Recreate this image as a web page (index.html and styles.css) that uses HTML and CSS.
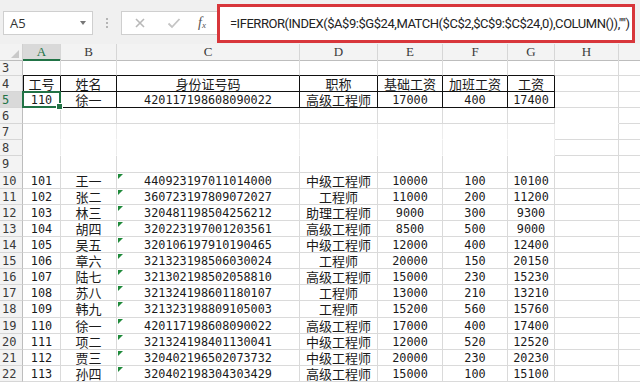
FILE: index.html
```html
<!DOCTYPE html>
<html lang="zh">
<head>
<meta charset="utf-8">
<link rel="stylesheet" href="styles.css">
</head>
<body>
<div class="toolbar">
  <div class="namebox"><span class="nb-text">A5</span><span class="nb-arrow"></span></div>
  <div class="dots"><i></i><i></i><i></i></div>
  <div class="fbox">
    <svg class="ic ic-x" width="12" height="12" viewBox="0 0 12 12"><path d="M2 2L10 10M10 2L2 10" stroke="#b8b8b8" stroke-width="1.6" fill="none"/></svg>
    <svg class="ic ic-ok" width="14" height="12" viewBox="0 0 14 12"><path d="M1.5 6.5L5 10L12.5 2" stroke="#c4c4c4" stroke-width="1.8" fill="none"/></svg>
    <span class="fx">f<sub>x</sub></span>
    <div class="ftext">=IFERROR(INDEX($A$9:$G$24,MATCH($C$2,$C$9:$C$24,0),COLUMN()),"")</div>
  </div>
</div>
<div class="sheet">
  <div class="row hdr">
    <div class="corner"><span class="ctri"></span></div>
    <div class="ch sel">A</div><div class="ch">B</div><div class="ch">C</div><div class="ch">D</div><div class="ch">E</div><div class="ch">F</div><div class="ch">G</div><div class="ch">H</div><div class="ch last"></div>
  </div>
  <div class="row tb-above">
    <div class="rh">3</div>
    <div class="c"></div><div class="c"></div><div class="c"></div><div class="c"></div><div class="c"></div><div class="c"></div><div class="c"></div><div class="c h"></div><div class="c i"></div>
  </div>
  <div class="row tbl">
    <div class="rh">4</div>
    <div class="c t first zh">工号</div><div class="c t zh">姓名</div><div class="c t zh">身份证号码</div><div class="c t zh">职称</div><div class="c t zh">基础工资</div><div class="c t zh">加班工资</div><div class="c t zh">工资</div><div class="c h"></div><div class="c i"></div>
  </div>
  <div class="row tbl">
    <div class="rh rsel">5</div>
    <div class="c t first n active">110</div><div class="c t zh">徐一</div><div class="c t n">420117198608090022</div><div class="c t zh">高级工程师</div><div class="c t n">17000</div><div class="c t n">400</div><div class="c t n">17400</div><div class="c h"></div><div class="c i"></div>
  </div>
  <div class="row">
    <div class="rh">6</div>
    <div class="c"></div><div class="c"></div><div class="c"></div><div class="c"></div><div class="c"></div><div class="c"></div><div class="c"></div><div class="c h nob"></div><div class="c i"></div>
  </div>
  <div class="row blank">
    <div class="rh">7</div>
    <div class="c"></div><div class="c"></div><div class="c"></div><div class="c"></div><div class="c"></div><div class="c"></div><div class="c"></div><div class="c h"></div><div class="c i"></div>
  </div>
  <div class="row blank">
    <div class="rh">8</div>
    <div class="c"></div><div class="c"></div><div class="c"></div><div class="c"></div><div class="c"></div><div class="c"></div><div class="c"></div><div class="c h"></div><div class="c i"></div>
  </div>
  <div class="row tall">
    <div class="rh">9</div>
    <div class="c"></div><div class="c"></div><div class="c"></div><div class="c"></div><div class="c"></div><div class="c"></div><div class="c"></div><div class="c h"></div><div class="c i"></div>
  </div>
  <div class="row"><div class="rh">10</div><div class="c n">101</div><div class="c zh">王一</div><div class="c n tri">440923197011014000</div><div class="c zh">中级工程师</div><div class="c n">10000</div><div class="c n">100</div><div class="c n">10100</div><div class="c h"></div><div class="c i"></div></div>
  <div class="row"><div class="rh">11</div><div class="c n">102</div><div class="c zh">张二</div><div class="c n tri">360723197809072027</div><div class="c zh">工程师</div><div class="c n">11000</div><div class="c n">200</div><div class="c n">11200</div><div class="c h"></div><div class="c i"></div></div>
  <div class="row"><div class="rh">12</div><div class="c n">103</div><div class="c zh">林三</div><div class="c n tri">320481198504256212</div><div class="c zh">助理工程师</div><div class="c n">9000</div><div class="c n">300</div><div class="c n">9300</div><div class="c h"></div><div class="c i"></div></div>
  <div class="row"><div class="rh">13</div><div class="c n">104</div><div class="c zh">胡四</div><div class="c n tri">320223197001203561</div><div class="c zh">高级工程师</div><div class="c n">8500</div><div class="c n">500</div><div class="c n">9000</div><div class="c h"></div><div class="c i"></div></div>
  <div class="row"><div class="rh">14</div><div class="c n">105</div><div class="c zh">吴五</div><div class="c n tri">320106197910190465</div><div class="c zh">中级工程师</div><div class="c n">12000</div><div class="c n">400</div><div class="c n">12400</div><div class="c h"></div><div class="c i"></div></div>
  <div class="row"><div class="rh">15</div><div class="c n">106</div><div class="c zh">章六</div><div class="c n tri">321323198506030024</div><div class="c zh">工程师</div><div class="c n">20000</div><div class="c n">150</div><div class="c n">20150</div><div class="c h"></div><div class="c i"></div></div>
  <div class="row"><div class="rh">16</div><div class="c n">107</div><div class="c zh">陆七</div><div class="c n tri">321302198502058810</div><div class="c zh">高级工程师</div><div class="c n">15000</div><div class="c n">230</div><div class="c n">15230</div><div class="c h"></div><div class="c i"></div></div>
  <div class="row"><div class="rh">17</div><div class="c n">108</div><div class="c zh">苏八</div><div class="c n tri">321324198601180107</div><div class="c zh">工程师</div><div class="c n">13000</div><div class="c n">210</div><div class="c n">13210</div><div class="c h"></div><div class="c i"></div></div>
  <div class="row tall"><div class="rh">18</div><div class="c n">109</div><div class="c zh">韩九</div><div class="c n tri">321323198809105003</div><div class="c zh">工程师</div><div class="c n">15200</div><div class="c n">560</div><div class="c n">15760</div><div class="c h"></div><div class="c i"></div></div>
  <div class="row"><div class="rh">19</div><div class="c n">110</div><div class="c zh">徐一</div><div class="c n tri">420117198608090022</div><div class="c zh">高级工程师</div><div class="c n">17000</div><div class="c n">400</div><div class="c n">17400</div><div class="c h"></div><div class="c i"></div></div>
  <div class="row"><div class="rh">20</div><div class="c n">111</div><div class="c zh">项二</div><div class="c n tri">321324198401130041</div><div class="c zh">中级工程师</div><div class="c n">12000</div><div class="c n">520</div><div class="c n">12520</div><div class="c h"></div><div class="c i"></div></div>
  <div class="row"><div class="rh">21</div><div class="c n">112</div><div class="c zh">贾三</div><div class="c n tri">320402196502073732</div><div class="c zh">中级工程师</div><div class="c n">20000</div><div class="c n">230</div><div class="c n">20230</div><div class="c h"></div><div class="c i"></div></div>
  <div class="row"><div class="rh">22</div><div class="c n">113</div><div class="c zh">孙四</div><div class="c n tri">320402198304303429</div><div class="c zh">高级工程师</div><div class="c n">15000</div><div class="c n">100</div><div class="c n">15100</div><div class="c h"></div><div class="c i"></div></div>
</div>
</body>
</html>
```
FILE: styles.css
```css
html, body {
  margin: 0;
  padding: 0;
  background: #ffffff;
  overflow: hidden;
  width: 640px;
  height: 382px;
}
body {
  font-family: "Noto Sans CJK SC", sans-serif;
  color: #111;
}
.toolbar {
  height: 44px;
  background: #f0f0f0;
  display: flex;
  align-items: center;
  box-sizing: border-box;
  padding-left: 3px;
  padding-top: 1px;
}
.namebox {
  width: 90px;
  height: 24px;
  box-sizing: border-box;
  background: #fff;
  border: 1px solid #cfcfcf;
  display: flex;
  align-items: center;
  justify-content: space-between;
  padding: 0 6px 0 6px;
}
.nb-text {
  font-family: "Open Sans", "Liberation Sans", sans-serif;
  font-size: 13px;
  color: #333;
}
.nb-arrow {
  width: 0;
  height: 0;
  border-left: 3px solid transparent;
  border-right: 3px solid transparent;
  border-top: 4px solid #777;
}
.dots {
  width: 28px;
  display: flex;
  flex-direction: column;
  align-items: center;
  gap: 2px;
}
.dots i {
  display: block;
  width: 2px;
  height: 2px;
  background: #b5b5b5;
}
.fbox {
  height: 24px;
  width: 513px;
  box-sizing: border-box;
  background: #fff;
  border: 1px solid #cfcfcf;
  display: flex;
  align-items: center;
}
.ic { display: block; flex: none; }
.ic-x { margin-left: 12px; }
.ic-ok { margin-left: 21px; }
.fx {
  font-family: "Liberation Serif", serif;
  font-style: italic;
  font-size: 14px;
  color: #555;
  margin-left: 17px;
  line-height: 1;
}
.fx sub {
  font-size: 9px;
  vertical-align: -1px;
}
.ftext {
  flex: none;
  width: 418px;
  height: 39px;
  margin-left: 11px;
  margin-top: 2px;
  box-sizing: border-box;
  border: 3px solid #d8363b;
  background: #fff;
  display: flex;
  align-items: center;
  padding-left: 10px;
  font-family: Roboto, "Liberation Sans", sans-serif;
  font-size: 13px;
  letter-spacing: -0.45px;
  color: #222;
  white-space: nowrap;
  overflow: hidden;
}
.sheet {
  display: flex;
  flex-direction: column;
}
.row {
  display: grid;
  grid-template-columns: 23px 38px 56px 183px 78px 65px 65px 47px 64px 1fr;
  height: 16px;
}
.row.tall { height: 17px; }
.hdr { height: 16px; background: #f3f3f3; }
.corner {
  background: #f3f3f3;
  border-right: 1px solid #d0d0d0;
  border-bottom: 1px solid #bdbdbd;
  box-sizing: border-box;
  position: relative;
}
.ctri {
  position: absolute;
  right: 3px;
  bottom: 2px;
  width: 0;
  height: 0;
  border-left: 8px solid transparent;
  border-bottom: 8px solid #c9c9c9;
}
.ch {
  box-sizing: border-box;
  border-right: 1px solid #d6d6d6;
  border-bottom: 1px solid #bdbdbd;
  text-align: center;
  font-family: "Liberation Serif", serif;
  font-size: 13px;
  line-height: 15px;
  color: #3a3a3a;
}
.ch.sel {
  background: #d9d9d9;
  color: #217346;
  border-bottom: 2px solid #217346;
}
.ch.last { border-right: none; }
.rh {
  box-sizing: border-box;
  background: #f3f3f3;
  border-right: 1px solid #bdbdbd;
  border-bottom: 1px solid #d6d6d6;
  font-family: "DejaVu Sans Mono", monospace;
  font-size: 12px;
  line-height: 14px;
  color: #3a3a3a;
  padding-left: 2px;
  text-align: left;
  display: flex;
  align-items: center;
}
.rh.rsel {
  background: #d9d9d9;
  color: #217346;
}
.c {
  box-sizing: border-box;
  border-right: 1px solid #dadada;
  border-bottom: 1px solid #dadada;
  text-align: center;
  white-space: nowrap;
  overflow: visible;
  position: relative;
  display: flex;
  align-items: center;
  justify-content: center;
}
.c.i { border-right: none; }
.zh {
  font-family: "Noto Sans CJK SC", sans-serif;
  font-size: 13px;
  line-height: 13px;
  padding-bottom: 1px;
  color: #1a1a1a;
}
.n {
  font-family: "DejaVu Sans Mono", monospace;
  font-size: 11.8px;
  line-height: 14px;
  color: #1a1a1a;
}
.tb-above .c:nth-child(-n+8) { border-bottom-color: #111; }
.tbl .t { border-right-color: #111; border-bottom-color: #111; }
.tbl .first { box-shadow: inset 1px 0 0 #111; }
.blank .c:nth-child(-n+8) { border-bottom-color: transparent; border-right-color: #ececec; }
.c.h.nob { border-bottom-color: transparent; }
.active::after {
  content: "";
  position: absolute;
  left: -1px;
  top: -1px;
  right: -1px;
  bottom: -1px;
  border: 2px solid #217346;
  pointer-events: none;
}
.active::before {
  content: "";
  position: absolute;
  right: -3px;
  bottom: -3px;
  width: 5px;
  height: 5px;
  background: #217346;
  border: 1px solid #fff;
  z-index: 2;
}
.tri::before {
  content: "";
  position: absolute;
  left: 1px;
  top: 1px;
  width: 0;
  height: 0;
  border-top: 5px solid #1f8a3a;
  border-right: 5px solid transparent;
}
```
